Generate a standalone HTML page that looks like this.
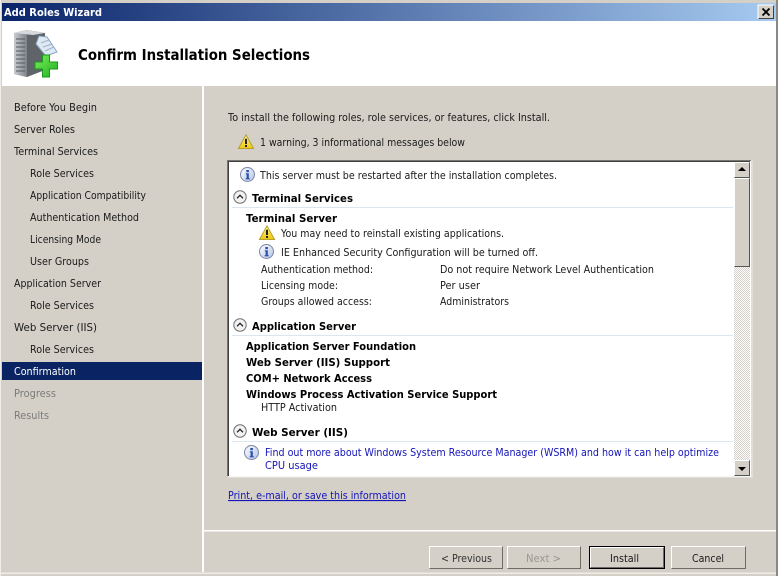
<!DOCTYPE html>
<html><head><meta charset="utf-8"><title>Add Roles Wizard</title>
<style>
html,body{margin:0;padding:0;background:#d4d0c8;width:778px;height:576px;overflow:hidden}
svg{display:block}
text{font-family:"DejaVu Sans","Liberation Sans",sans-serif;font-size:11px;fill:#1a1a1a}
.b{font-weight:bold;fill:#000}
.g{fill:#7b7b78}
.l{fill:#1414b8}
</style></head><body>
<svg width="778" height="576" viewBox="0 0 778 576" xmlns="http://www.w3.org/2000/svg">
<defs>
<linearGradient id="tb" x1="0" x2="1" y1="0" y2="0"><stop offset="0" stop-color="#0a246a"/><stop offset="1" stop-color="#a6caf0"/></linearGradient>
<linearGradient id="inf" x1="0" y1="0" x2="1" y2="1"><stop offset="0" stop-color="#fff"/><stop offset="1" stop-color="#b4c4e4"/></linearGradient>
<linearGradient id="wrn" x1="0" y1="0" x2="0" y2="1"><stop offset="0" stop-color="#fff27a"/><stop offset="1" stop-color="#ecc810"/></linearGradient>
<linearGradient id="srv" x1="0" y1="0" x2="1" y2="0"><stop offset="0" stop-color="#c8ccd2"/><stop offset="1" stop-color="#7e8288"/></linearGradient>
<linearGradient id="grn" x1="0" y1="0" x2="1" y2="1"><stop offset="0" stop-color="#7cf05a"/><stop offset="1" stop-color="#1fae22"/></linearGradient>
<pattern id="dith" width="2" height="2" patternUnits="userSpaceOnUse"><rect width="2" height="2" fill="#fff"/><rect width="1" height="1" fill="#d4d0c8"/><rect x="1" y="1" width="1" height="1" fill="#d4d0c8"/></pattern>
<g id="info"><circle cx="7.5" cy="7.5" r="7" fill="url(#inf)" stroke="#7a86a4"/><rect x="6.300" y="3" width="2.600" height="2.200" fill="#2a4fb0"/><path d="M5.800 6.300h3v5h1v1.100H5.600v-1.100h1v-3.900h-.8z" fill="#2a4fb0"/></g>
<g id="warn"><path d="M8 .8 15.600 14.600H.4z" fill="url(#wrn)" stroke="#b09a30" stroke-width=".9"/><rect x="7" y="4.800" width="2" height="5.200" fill="#222"/><rect x="7" y="11" width="2" height="2" fill="#222"/></g>
<g id="chev"><circle cx="7" cy="7" r="6.200" fill="#f2f2f2" stroke="#6d6d6d"/><path d="M4 8.300 7 5.300l3 3" fill="none" stroke="#222" stroke-width="1.300"/></g>
</defs>

<rect width="778" height="576" fill="#d4d0c8"/>
<!-- title bar -->
<rect x="2" y="3" width="774" height="18" fill="url(#tb)"/>
<text class="b" x="4" y="16" textLength="98" lengthAdjust="spacingAndGlyphs" style="fill:#fff">Add Roles Wizard</text>
<rect x="758" y="5" width="16" height="14" fill="#d4d0c8"/>
<path d="M758 19V5h16" fill="none" stroke="#fff"/><path d="M758.500 18.500h15v-13" fill="none" stroke="#404040"/>
<path d="M762.500 8.500l7 7M769.500 8.500l-7 7" stroke="#000" stroke-width="1.800"/>

<!-- header -->
<rect x="2" y="21" width="774" height="65" fill="#fff"/>
<rect x="776" y="0" width="2" height="576" fill="#8a8884"/>
<!-- server icon -->
<path d="M14 33 27 30 45 33V70L27 77 14 74z" fill="#5f6469"/>
<path d="M14 33 27 30V77L14 74z" fill="url(#srv)"/>
<path d="M14 33 27 30 45 33 33 35z" fill="#d5d7da"/>
<path d="M16 39h9M16 43h9M16 47h9M16 51h9M16 55h9M16 59h9M16 63h9M16 67h9M16 71h9" stroke="#55595e"/>
<path d="M39 36 47 37 57 52 46 56 36 44z" fill="#dfe9f3" stroke="#8aa4c0"/>
<path d="M41 43 49 40M43 47 52 44M45 51 54 47" stroke="#9bb1c8"/>
<path d="M42.500 55h7v7h8v7h-8v8h-7v-8H35v-7h7.500z" fill="url(#grn)" stroke="#189a1a"/>
<text class="b" x="78" y="60" style="font-size:15px" textLength="232" lengthAdjust="spacingAndGlyphs">Confirm Installation Selections</text>

<!-- panels -->
<rect x="202" y="86" width="2" height="486" fill="#fff"/>
<rect x="204" y="530" width="572" height="1.500" fill="#fff"/>
<rect x="0" y="572.500" width="776" height="1.500" fill="#efede8"/>
<rect x="0" y="0" width="1" height="576" fill="#efede8"/>

<!-- nav -->
<rect x="2" y="362" width="200" height="18" fill="#0a2463"/>
<text x="14" y="111" textLength="83" lengthAdjust="spacingAndGlyphs">Before You Begin</text>
<text x="14" y="133" textLength="61" lengthAdjust="spacingAndGlyphs">Server Roles</text>
<text x="14" y="155" textLength="84" lengthAdjust="spacingAndGlyphs">Terminal Services</text>
<text x="30" y="177" textLength="64" lengthAdjust="spacingAndGlyphs">Role Services</text>
<text x="30" y="199" textLength="116" lengthAdjust="spacingAndGlyphs">Application Compatibility</text>
<text x="30" y="221" textLength="109" lengthAdjust="spacingAndGlyphs">Authentication Method</text>
<text x="30" y="243" textLength="71" lengthAdjust="spacingAndGlyphs">Licensing Mode</text>
<text x="30" y="265" textLength="59" lengthAdjust="spacingAndGlyphs">User Groups</text>
<text x="14" y="287" textLength="87" lengthAdjust="spacingAndGlyphs">Application Server</text>
<text x="30" y="309" textLength="64" lengthAdjust="spacingAndGlyphs">Role Services</text>
<text x="14" y="331" textLength="83" lengthAdjust="spacingAndGlyphs">Web Server (IIS)</text>
<text x="30" y="353" textLength="64" lengthAdjust="spacingAndGlyphs">Role Services</text>
<text x="14" y="375" textLength="62" lengthAdjust="spacingAndGlyphs" style="fill:#fff">Confirmation</text>
<text class="g" x="14" y="397" textLength="42" lengthAdjust="spacingAndGlyphs">Progress</text>
<text class="g" x="14" y="419" textLength="35" lengthAdjust="spacingAndGlyphs">Results</text>

<!-- right top -->
<text x="228" y="121" textLength="322" lengthAdjust="spacingAndGlyphs">To install the following roles, role services, or features, click Install.</text>
<use href="#warn" x="238" y="134"/>
<text x="260" y="146" textLength="205" lengthAdjust="spacingAndGlyphs">1 warning, 3 informational messages below</text>

<!-- list box -->
<rect x="227" y="160" width="524" height="317" fill="#fff"/>
<path d="M227.500 477V160.500H751" fill="none" stroke="#77756f"/>
<path d="M228.500 476V161.500H750" fill="none" stroke="#404040"/>
<path d="M227 477h525V160" fill="none" stroke="#eeece7" stroke-width="1"/>
<!-- scrollbar -->
<rect x="734" y="162" width="16" height="314" fill="url(#dith)"/>
<rect x="734" y="162" width="16" height="16" fill="#d4d0c8"/>
<path d="M734.500 177.500v-15h15" fill="none" stroke="#fff"/><path d="M734.500 177.500h15v-15" fill="none" stroke="#555"/>
<path d="M742 167l-4 4h8z" fill="#000"/>
<rect x="734" y="178" width="16" height="89" fill="#d4d0c8"/>
<path d="M734.500 266.500v-88h15" fill="none" stroke="#fff"/><path d="M734.500 266.500h15v-88" fill="none" stroke="#555"/>
<rect x="734" y="460" width="16" height="16" fill="#d4d0c8"/>
<path d="M734.500 475.500v-15h15" fill="none" stroke="#fff"/><path d="M734.500 475.500h15v-15" fill="none" stroke="#555"/>
<path d="M742 471l-4-4h8z" fill="#000"/>

<!-- list content -->
<use href="#info" x="240" y="167"/>
<text x="260" y="179" textLength="297" lengthAdjust="spacingAndGlyphs">This server must be restarted after the installation completes.</text>
<use href="#chev" x="233" y="190"/>
<text class="b" x="252" y="202" textLength="101" lengthAdjust="spacingAndGlyphs">Terminal Services</text>
<rect x="232" y="207" width="501" height="1" fill="#dbe6f2"/>
<text class="b" x="246" y="222" textLength="91" lengthAdjust="spacingAndGlyphs">Terminal Server</text>
<use href="#warn" x="259" y="225"/>
<text x="281" y="237" textLength="223" lengthAdjust="spacingAndGlyphs">You may need to reinstall existing applications.</text>
<use href="#info" x="259" y="244"/>
<text x="281" y="256" textLength="257" lengthAdjust="spacingAndGlyphs">IE Enhanced Security Configuration will be turned off.</text>
<text x="261" y="273" textLength="112" lengthAdjust="spacingAndGlyphs">Authentication method:</text>
<text x="440" y="273" textLength="214" lengthAdjust="spacingAndGlyphs">Do not require Network Level Authentication</text>
<text x="261" y="289" textLength="77" lengthAdjust="spacingAndGlyphs">Licensing mode:</text>
<text x="440" y="289" textLength="40" lengthAdjust="spacingAndGlyphs">Per user</text>
<text x="261" y="305" textLength="111" lengthAdjust="spacingAndGlyphs">Groups allowed access:</text>
<text x="440" y="305" textLength="69" lengthAdjust="spacingAndGlyphs">Administrators</text>
<use href="#chev" x="233" y="318"/>
<text class="b" x="252" y="330" textLength="104" lengthAdjust="spacingAndGlyphs">Application Server</text>
<rect x="232" y="335" width="501" height="1" fill="#dbe6f2"/>
<text class="b" x="246" y="350" textLength="170" lengthAdjust="spacingAndGlyphs">Application Server Foundation</text>
<text class="b" x="246" y="366" textLength="144" lengthAdjust="spacingAndGlyphs">Web Server (IIS) Support</text>
<text class="b" x="246" y="382" textLength="126" lengthAdjust="spacingAndGlyphs">COM+ Network Access</text>
<text class="b" x="246" y="398" textLength="251" lengthAdjust="spacingAndGlyphs">Windows Process Activation Service Support</text>
<text x="261" y="411" textLength="76" lengthAdjust="spacingAndGlyphs">HTTP Activation</text>
<use href="#chev" x="233" y="424"/>
<text class="b" x="252" y="436" textLength="96" lengthAdjust="spacingAndGlyphs">Web Server (IIS)</text>
<rect x="232" y="441" width="501" height="1" fill="#dbe6f2"/>
<use href="#info" x="244" y="445"/>
<text class="l" x="265" y="456" textLength="454" lengthAdjust="spacingAndGlyphs">Find out more about Windows System Resource Manager (WSRM) and how it can help optimize</text>
<text class="l" x="265" y="469" textLength="53" lengthAdjust="spacingAndGlyphs">CPU usage</text>

<!-- link -->
<text class="l" x="228" y="499" textLength="178" lengthAdjust="spacingAndGlyphs" text-decoration="underline">Print, e-mail, or save this information</text>

<!-- buttons -->
<path d="M429.500 568.500v-22h73" fill="none" stroke="#fff"/><path d="M429.500 568.500h73v-22" fill="none" stroke="#6e6c68"/>
<text x="441" y="562" textLength="51" lengthAdjust="spacingAndGlyphs" style="fill:#333">&lt; Previous</text>
<path d="M507.500 568.500v-22h73" fill="none" stroke="#fff"/><path d="M507.500 568.500h73v-22" fill="none" stroke="#6e6c68"/>
<text x="526" y="562" textLength="35" lengthAdjust="spacingAndGlyphs" style="fill:#9a9892">Next &gt;</text>
<rect x="589.500" y="546.500" width="75" height="22" fill="none" stroke="#000"/>
<path d="M590.500 567.500v-20h73" fill="none" stroke="#fff"/><path d="M590.500 567.500h73v-20" fill="none" stroke="#6e6c68"/>
<text x="610" y="562" textLength="29" lengthAdjust="spacingAndGlyphs">Install</text>
<path d="M671.500 568.500v-22h74" fill="none" stroke="#fff"/><path d="M671.500 568.500h74v-22" fill="none" stroke="#6e6c68"/>
<text x="692" y="562" textLength="32" lengthAdjust="spacingAndGlyphs">Cancel</text>
</svg>
</body></html>
